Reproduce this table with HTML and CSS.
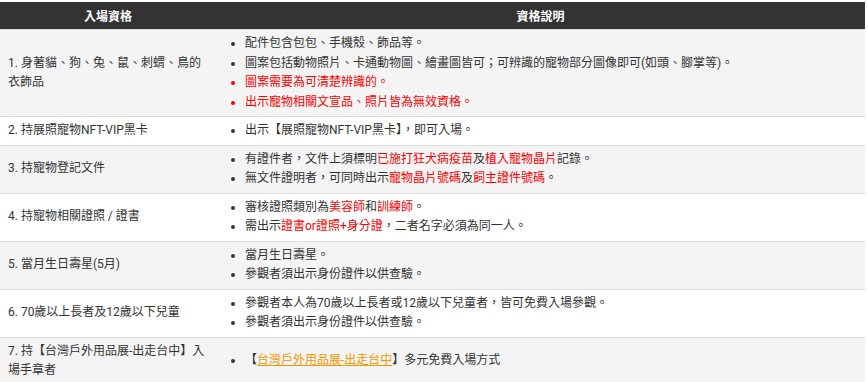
FILE: index.html
```html
<!DOCTYPE html>
<html lang="zh-Hant">
<head>
<meta charset="utf-8">
<title>入場資格</title>
<link rel="stylesheet" href="styles.css">
</head>
<body>
<table class="qual">
  <colgroup><col class="c1"><col class="c2"></colgroup>
  <thead>
    <tr><th>入場資格</th><th>資格說明</th></tr>
  </thead>
  <tbody>
    <tr>
      <td class="name">1. 身著貓、狗、兔、鼠、刺蝟、鳥的衣飾品</td>
      <td><ul>
        <li>配件包含包包、手機殼、飾品等。</li>
        <li>圖案包括動物照片、卡通動物圖、繪畫圖皆可；可辨識的寵物部分圖像即可(如頭、腳掌等)。</li>
        <li class="red">圖案需要為可清楚辨識的。</li>
        <li class="red">出示寵物相關文宣品、照片皆為無效資格。</li>
      </ul></td>
    </tr>
    <tr>
      <td class="name">2. 持展照寵物NFT-VIP黑卡</td>
      <td><ul><li>出示【展照寵物NFT-VIP黑卡】，即可入場。</li></ul></td>
    </tr>
    <tr>
      <td class="name">3. 持寵物登記文件</td>
      <td><ul>
        <li>有證件者，文件上須標明<span class="hl">已施打狂犬病疫苗</span>及<span class="hl">植入寵物晶片</span>記錄。</li>
        <li>無文件證明者，可同時出示<span class="hl">寵物晶片號碼</span>及<span class="hl">飼主證件號碼</span>。</li>
      </ul></td>
    </tr>
    <tr>
      <td class="name">4. 持寵物相關證照 / 證書</td>
      <td><ul>
        <li>審核證照類別為<span class="hl">美容師</span>和<span class="hl">訓練師</span>。</li>
        <li>需出示<span class="hl">證書or證照+身分證</span>，二者名字必須為同一人。</li>
      </ul></td>
    </tr>
    <tr>
      <td class="name">5. 當月生日壽星(5月)</td>
      <td><ul>
        <li>當月生日壽星。</li>
        <li>參觀者須出示身份證件以供查驗。</li>
      </ul></td>
    </tr>
    <tr>
      <td class="name">6. 70歲以上長者及12歲以下兒童</td>
      <td><ul>
        <li>參觀者本人為70歲以上長者或12歲以下兒童者，皆可免費入場參觀。</li>
        <li>參觀者須出示身份證件以供查驗。</li>
      </ul></td>
    </tr>
    <tr>
      <td class="name">7. 持【台灣戶外用品展-出走台中】入場手章者</td>
      <td><ul><li>【<a href="#" class="link">台灣戶外用品展-出走台中</a>】多元免費入場方式</li></ul></td>
    </tr>
  </tbody>
</table>
</body>
</html>
```
FILE: styles.css
```css
html, body {
  margin: 0;
  padding: 0;
  background: #fff;
}
body {
  padding-top: 2px;
  font-family: Roboto, "Noto Sans CJK TC", sans-serif;
  font-size: 12px;
  color: #333;
}
.qual {
  width: 865px;
  border-collapse: collapse;
  table-layout: fixed;
}
.qual .c1 { width: 216px; }
.qual th {
  background: #333;
  color: #fff;
  font-weight: bold;
  font-size: 12px;
  height: 27px;
  padding: 0;
  text-align: center;
  vertical-align: middle;
  border-bottom: 1px solid #ddd;
}
.qual td {
  padding: 4px 8px;
  line-height: 19.5px;
  vertical-align: middle;
  border-bottom: 1px solid #ddd;
}
.qual tbody tr:nth-child(odd) td { background: #f4f4f4; }
.qual tbody tr:nth-child(even) td { background: #fff; }
.qual ul {
  margin: 0;
  padding-left: 21px;
}
.qual li.red { color: #ff0000; }
.qual .hl { color: #ff0000; }
.qual .link {
  color: #f39800;
  text-decoration: underline;
}
```
